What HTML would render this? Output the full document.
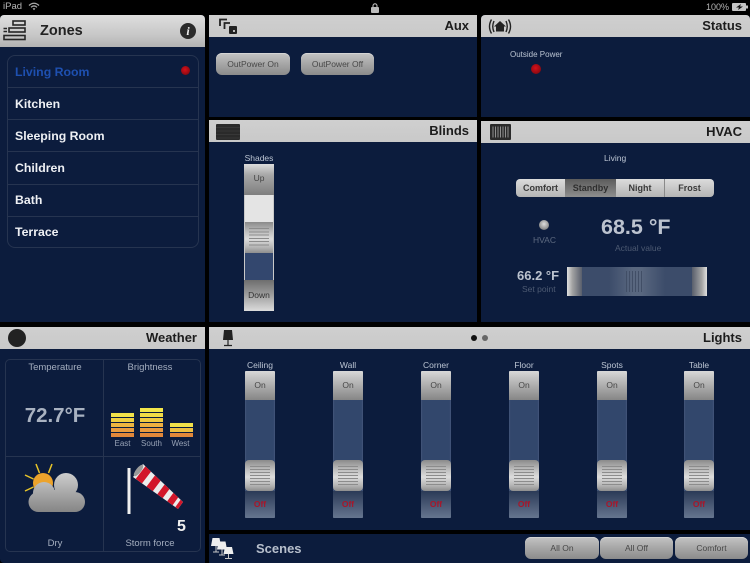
<!DOCTYPE html>
<html><head><meta charset="utf-8">
<style>
html,body{margin:0;padding:0;background:#000;width:750px;height:563px;overflow:hidden}
body{font-family:"Liberation Sans",sans-serif;position:relative;filter:blur(.35px)}
div,span{position:absolute;box-sizing:border-box}
svg{position:absolute;overflow:visible}
.body{background:#0c1c3d}
.hd{background:linear-gradient(#cfcfcf,#c9c9c9);height:22px}
.ttl{position:absolute;right:8px;top:2px;font-weight:bold;font-size:13px;color:#1c1c1c;line-height:18px;white-space:nowrap}
.t{white-space:nowrap;text-align:center;line-height:12px}
.lbl{font-size:8.5px;color:#bcc5d3}
.btn{height:22px;border-radius:6px;background:linear-gradient(#c4c4c4 0%,#a9a9a9 45%,#8b8b8b 100%);color:#484848;font-size:8.5px;text-align:center;line-height:22px;box-shadow:inset 0 1px 0 #d4d4d4}
.row{left:15px;font-weight:bold;font-size:12.3px;color:#eef0f4;line-height:16px;white-space:nowrap}
.div{left:8px;width:190px;height:1px;background:#263450}
.s{width:30px;height:147px;top:371px;background:linear-gradient(90deg,#46577c,#32476c 5%,#32476c 95%,#46577c);border-radius:1px}
.cap{left:0;width:30px;height:29px;top:0;background:linear-gradient(#d8d8d8,#c2c2c2 25%,#868686 100%);color:#484848;font-size:8.5px;text-align:center;line-height:29px;border-radius:1px 1px 0 0}
.off{left:0;width:30px;height:27px;top:120px;background:linear-gradient(#2b3a57,#66758f);color:#a8162a;font-size:8.5px;text-align:center;line-height:26px;font-weight:bold;border-radius:0 0 1px 1px}
.kn{left:0;width:30px;height:31px;top:89px;border-radius:4px;background:linear-gradient(#8a8a8a,#c4c4c4 35%,#dcdcdc 55%,#b8b8b8 80%,#8e8e8e)}
.kn i{position:absolute;left:5px;width:20px;height:1px;background:#8c8c8c}
.bar{left:0;width:23px;height:3.5px}
.seg{top:179px;height:18px;font-size:9px;font-weight:bold;color:#3a3a3a;text-align:center;line-height:18px;background:linear-gradient(#dcdcdc,#b4b4b4)}
</style></head><body>

<!-- status bar -->
<div class="t" style="left:3px;top:1px;font-size:9.5px;color:#b8b8b8">iPad</div>
<svg style="left:28px;top:2px" width="12" height="9" viewBox="0 0 12 9"><path d="M1 3.5Q6-1 11 3.5M3 5.3Q6 2.6 9 5.3" fill="none" stroke="#aaa" stroke-width="1.3"/><path d="M4.6 6.6L6 8.2 7.4 6.6Q6 5.6 4.6 6.6Z" fill="#aaa"/></svg>
<svg style="left:371px;top:3px" width="8" height="10" viewBox="0 0 8 10"><rect y="4" width="8" height="6" rx="1" fill="#bbb"/><path d="M2 4.5V2.8a2 2 0 0 1 4 0V4.5" fill="none" stroke="#bbb" stroke-width="1.1"/></svg>
<div class="t" style="left:706px;top:1px;font-size:9px;color:#b4b4b4">100%</div>
<svg style="left:732px;top:3px" width="16" height="8" viewBox="0 0 16 8"><rect width="14" height="8" rx="1" fill="#c4c4c4"/><rect x="14" y="2.5" width="2" height="3" fill="#c4c4c4"/><path d="M9 1L4 4.5H7L6 7 11 3.5H8Z" fill="#111"/></svg>

<!-- Zones -->
<div class="body" style="left:0;top:15px;width:205px;height:307px;border-radius:4px 4px 0 0"></div>
<div style="left:0;top:15px;width:205px;height:32px;border-radius:4px 4px 0 0;background:linear-gradient(#dedede,#c6c6c6 65%,#b2b2b2)"></div>
<svg style="left:3px;top:20px" width="23" height="21" viewBox="0 0 23 21"><g fill="none" stroke="#262626" stroke-width="1.6"><rect x="10" y="1" width="12" height="4"/><rect x="6" y="8" width="16" height="4"/><rect x="1" y="15.5" width="21" height="4"/></g><path d="M0.500 8.500h3.500M0.500 11.500h3.500" stroke="#262626" stroke-width="1.6"/></svg>
<div class="t" style="left:40px;top:23px;font-size:14.5px;font-weight:bold;color:#222;line-height:16px">Zones</div>
<div style="left:180px;top:23px;width:16px;height:16px;border-radius:50%;background:#2a2a2a;color:#eee;font:italic bold 12px/16px 'Liberation Serif',serif;text-align:center">i</div>

<div style="left:7px;top:55px;width:192px;height:193px;border:1px solid #263450;border-radius:8px"></div>
<div class="div" style="top:87px"></div><div class="div" style="top:119px"></div><div class="div" style="top:151px"></div><div class="div" style="top:184px"></div><div class="div" style="top:216px"></div>
<div class="row" style="top:64px;color:#1e50b0">Living Room</div>
<div style="left:181px;top:66px;width:9px;height:9px;border-radius:50%;background:radial-gradient(circle at 45% 40%,#d8101a,#8c0a12 70%,#3a1a22)"></div>
<div class="row" style="top:96px">Kitchen</div>
<div class="row" style="top:128px">Sleeping Room</div>
<div class="row" style="top:160px">Children</div>
<div class="row" style="top:192px">Bath</div>
<div class="row" style="top:224px">Terrace</div>

<!-- Aux -->
<div class="body" style="left:209px;top:15px;width:268px;height:102px"></div>
<div class="hd" style="left:209px;top:15px;width:268px"><span class="ttl">Aux</span></div>
<svg style="left:219px;top:18px" width="19" height="17" viewBox="0 0 19 17"><g fill="none" stroke="#222" stroke-width="1.800"><path d="M1 8V1.500H8"/><path d="M5.500 11V5H11"/></g><rect x="10" y="8" width="8" height="8" rx="1" fill="#222"/><rect x="14" y="12" width="2" height="2" fill="#bbb"/></svg>
<div class="btn" style="left:216px;top:53px;width:74px">OutPower On</div>
<div class="btn" style="left:301px;top:53px;width:73px">OutPower Off</div>

<!-- Status -->
<div class="body" style="left:481px;top:15px;width:269px;height:102px;border-radius:4px 4px 0 0"></div>
<div class="hd" style="left:481px;top:15px;width:269px;border-radius:4px 4px 0 0"><span class="ttl">Status</span></div>
<svg style="left:488px;top:19px" width="24" height="15" viewBox="0 0 24 15"><g fill="none" stroke="#222" stroke-width="1.400"><path d="M3.500 0.500Q-0.500 7.500 3.500 14.500M20.500 0.500Q24.500 7.500 20.500 14.500M6 2Q3.500 7.500 6 13M18 2Q20.500 7.500 18 13"/></g><path d="M12 2L18 7.500H16V12.500H8V7.500H6Z" fill="#222"/></svg>
<div class="t" style="left:510px;top:49px;font-size:8px;color:#bcc5d3">Outside Power</div>
<div style="left:531px;top:64px;width:10px;height:10px;border-radius:50%;background:radial-gradient(circle at 45% 40%,#d8101a,#8c0a12 70%,#3a1a22)"></div>

<!-- Blinds -->
<div class="body" style="left:209px;top:120px;width:268px;height:202px"></div>
<div class="hd" style="left:209px;top:120px;width:268px"><span class="ttl">Blinds</span></div>
<svg style="left:216px;top:124px" width="24" height="16" viewBox="0 0 24 16"><rect width="24" height="16" rx="1" fill="#2a2a2a"/><path d="M0 3.500H24M0 7H24M0 10.500H24M0 14H24" stroke="#3c3c3c" stroke-width=".8"/></svg>
<div class="t lbl" style="left:244px;top:152px;width:30px">Shades</div>
<div style="left:244px;top:164px;width:30px;height:147px;background:#c9c9c9;border-radius:1px"></div>
<div style="left:244px;top:164px;width:30px;height:31px;background:linear-gradient(#dcdcdc,#a8a8a8 35%,#7e7e7e);color:#444;font-size:8.5px;text-align:center;line-height:29px">Up</div>
<div style="left:245px;top:195px;width:28px;height:27px;background:#e4e4e4"></div>
<div style="left:245px;top:222px;width:28px;height:31px;background:linear-gradient(#8a8a8a,#c4c4c4 35%,#dcdcdc 55%,#b8b8b8 80%,#8e8e8e)"></div>
<div style="left:249px;top:228px;width:20px;height:19px;background:repeating-linear-gradient(#8c8c8c 0 1px,transparent 1px 3.300px)"></div>
<div style="left:245px;top:253px;width:28px;height:27px;background:#33476e"></div>
<div style="left:244px;top:280px;width:30px;height:31px;background:linear-gradient(#6e6e6e,#a0a0a0 50%,#dcdcdc);color:#333;font-size:8.5px;text-align:center;line-height:31px">Down</div>

<!-- HVAC -->
<div class="body" style="left:481px;top:121px;width:269px;height:201px"></div>
<div class="hd" style="left:481px;top:121px;width:269px"><span class="ttl">HVAC</span></div>
<svg style="left:490px;top:124px" width="21" height="16" viewBox="0 0 21 16"><rect width="21" height="16" rx="1" fill="#2a2a2a"/><path d="M3 2.500V13.500M5.500 2.500V13.500M8 2.500V13.500M10.500 2.500V13.500M13 2.500V13.500M15.500 2.500V13.500M18 2.500V13.500" stroke="#8f8f8f" stroke-width="1"/></svg>
<div class="t lbl" style="left:604px;top:152px">Living</div>
<div class="seg" style="left:516px;width:49px;border-radius:4px 0 0 4px">Comfort</div>
<div class="seg" style="left:565px;width:51px;background:linear-gradient(#5c5c5c,#8e8e8e);color:#2e2e2e">Standby</div>
<div class="seg" style="left:616px;width:49px;border-right:1px solid #8a8a8a">Night</div>
<div class="seg" style="left:665px;width:49px;border-radius:0 4px 4px 0">Frost</div>
<div style="left:539px;top:220px;width:10px;height:10px;border-radius:50%;background:radial-gradient(circle at 50% 40%,#dedede,#8f8f8f 65%,#3a3f4c)"></div>
<div class="t" style="left:533px;top:234px;font-size:8.5px;color:#5e6a80">HVAC</div>
<div class="t" style="left:601px;top:215px;font-size:21.500px;font-weight:bold;color:#bcc3cf;line-height:24px">68.5 °F</div>
<div class="t" style="left:615px;top:242px;font-size:8.500px;color:#4d5a72">Actual value</div>
<div class="t" style="left:517px;top:269px;font-size:13px;font-weight:bold;color:#bcc3cf;line-height:14px">66.2 °F</div>
<div class="t" style="left:522px;top:283px;font-size:8.500px;color:#4d5a72">Set point</div>
<div style="left:567px;top:267px;width:140px;height:29px;background:linear-gradient(90deg,#3c4c6a 0%,#3c4c6a 30%,#59677f 47%,#59677f 53%,#3c4c6a 70%,#3c4c6a 100%);border-radius:1px"></div>
<div style="left:567px;top:267px;width:15px;height:29px;background:linear-gradient(90deg,#e0e0e0,#a4a4a4 35%,#585e6c)"></div>
<div style="left:692px;top:267px;width:15px;height:29px;background:linear-gradient(90deg,#585e6c,#a4a4a4 65%,#e0e0e0)"></div>
<div style="left:626px;top:271px;width:17px;height:21px;background:repeating-linear-gradient(90deg,#414e66 0 1px,transparent 1px 3px)"></div>

<!-- Weather -->
<div class="body" style="left:0;top:327px;width:205px;height:236px;border-radius:0 0 0 4px"></div>
<div class="hd" style="left:0;top:327px;width:205px;height:22px"><span class="ttl">Weather</span></div>
<div style="left:8px;top:329px;width:18px;height:18px;border-radius:50%;background:radial-gradient(#222 70%,#555)"></div>
<div style="left:5px;top:359px;width:196px;height:193px;border:1px solid #263450;border-radius:5px"></div>
<div style="left:103px;top:359px;width:1px;height:193px;background:#263450"></div>
<div style="left:5px;top:456px;width:196px;height:1px;background:#263450"></div>
<div class="t" style="left:6px;width:98px;top:362px;font-size:9.500px;color:#a4aebf">Temperature</div>
<div class="t" style="left:101px;width:98px;top:362px;font-size:9.500px;color:#a4aebf">Brightness</div>
<div class="t" style="left:5px;width:100px;top:404px;font-size:20.500px;font-weight:bold;color:#a9b2c1;line-height:24px">72.7°F</div>
<div style="left:111px;top:413px;width:23px;height:24px"><span class="bar" style="top:0;background:#f2e24a"></span><span class="bar" style="top:5px;background:#f0d040"></span><span class="bar" style="top:10px;background:#eeb640"></span><span class="bar" style="top:15px;background:#e89c3e"></span><span class="bar" style="top:20px;background:#e2883a"></span></div>
<div style="left:140px;top:408px;width:23px;height:29px"><span class="bar" style="top:0;background:#f4e64a"></span><span class="bar" style="top:5px;background:#f2dc46"></span><span class="bar" style="top:10px;background:#f0ca40"></span><span class="bar" style="top:15px;background:#eeb040"></span><span class="bar" style="top:20px;background:#e89a3e"></span><span class="bar" style="top:25px;background:#e2883a"></span></div>
<div style="left:170px;top:423px;width:23px;height:14px"><span class="bar" style="top:0;background:#f2e24a"></span><span class="bar" style="top:5px;background:#eec040"></span><span class="bar" style="top:10px;background:#e2883a"></span></div>
<div class="t" style="left:111px;width:23px;top:438px;font-size:8px;color:#97a2b5">East</div>
<div class="t" style="left:140px;width:23px;top:438px;font-size:8px;color:#97a2b5">South</div>
<div class="t" style="left:170px;width:21px;top:438px;font-size:8px;color:#97a2b5">West</div>

<svg style="left:0;top:0" width="205" height="563" viewBox="0 0 205 563">
<defs><linearGradient id="cl" gradientUnits="userSpaceOnUse" x1="0" y1="473" x2="0" y2="512"><stop offset="0" stop-color="#cdcdcd"/><stop offset="1" stop-color="#858585"/></linearGradient></defs>
<g stroke="#e8c52a" stroke-width="1.500" fill="none"><path d="M36 464L39.500 473M52 464L48.500 473M25 475L33.500 479M25 491L33.500 487"/></g>
<circle cx="43" cy="483" r="10" fill="#eca32c"/>
<g fill="url(#cl)"><circle cx="66" cy="485" r="12"/><circle cx="44" cy="493" r="11"/><circle cx="38.500" cy="502" r="10"/><circle cx="75" cy="502" r="10"/><rect x="38.500" y="490" width="36.500" height="22"/></g>
<rect x="127.500" y="468" width="3" height="46" fill="#f0f0f0"/>
<path d="M143 464L183 502 178 509 133 477Z" fill="#ececec"/>
<path d="M145.400 466.300L151 471.600 142 483.400 135.700 478.900ZM155 475.400L160.600 480.700 152.800 491.100 146.500 486.600ZM164.600 484.500L169.400 489.100 162.700 498.100 157.300 494.300ZM173.400 492.900L178.200 497.400 172.600 505.200 167.200 501.300ZM180.600 499.700L183 502 178 509 175.300 507.100Z" fill="#d2162a"/>
<ellipse cx="138.500" cy="470.500" rx="2.500" ry="7" transform="rotate(38 138.500 470.500)" fill="#9a9a9a"/>
</svg>
<div class="t" style="left:5px;width:100px;top:538px;font-size:9.500px;color:#a4aebf">Dry</div>
<div class="t" style="left:177px;top:518px;font-size:16px;font-weight:bold;color:#f0f0f0;line-height:18px">5</div>
<div class="t" style="left:101px;width:98px;top:538px;font-size:9.500px;color:#a4aebf">Storm force</div>

<!-- Lights -->
<div class="body" style="left:209px;top:327px;width:541px;height:203px"></div>
<div class="hd" style="left:209px;top:327px;width:541px"><span class="ttl">Lights</span></div>
<svg style="left:222px;top:330px" width="12" height="17" viewBox="0 0 12 17"><path d="M2 0H10L11 10H1Z" fill="#222"/><path d="M6 10V15M2 15.500H10" stroke="#222" stroke-width="1.200"/></svg>
<div style="left:471px;top:335px;width:6px;height:6px;border-radius:50%;background:#111"></div>
<div style="left:482px;top:335px;width:6px;height:6px;border-radius:50%;background:#666"></div>

<div class="t lbl" style="left:245px;width:30px;top:359px">Ceiling</div>
<div class="s" style="left:245px"><div class="cap">On</div><div class="off">Off</div><div class="kn"><i style="top:6px"></i><i style="top:9px"></i><i style="top:12px"></i><i style="top:15px"></i><i style="top:18px"></i><i style="top:21px"></i><i style="top:24px"></i></div></div>
<div class="t lbl" style="left:333px;width:30px;top:359px">Wall</div>
<div class="s" style="left:333px"><div class="cap">On</div><div class="off">Off</div><div class="kn"><i style="top:6px"></i><i style="top:9px"></i><i style="top:12px"></i><i style="top:15px"></i><i style="top:18px"></i><i style="top:21px"></i><i style="top:24px"></i></div></div>
<div class="t lbl" style="left:421px;width:30px;top:359px">Corner</div>
<div class="s" style="left:421px"><div class="cap">On</div><div class="off">Off</div><div class="kn"><i style="top:6px"></i><i style="top:9px"></i><i style="top:12px"></i><i style="top:15px"></i><i style="top:18px"></i><i style="top:21px"></i><i style="top:24px"></i></div></div>
<div class="t lbl" style="left:509px;width:30px;top:359px">Floor</div>
<div class="s" style="left:509px"><div class="cap">On</div><div class="off">Off</div><div class="kn"><i style="top:6px"></i><i style="top:9px"></i><i style="top:12px"></i><i style="top:15px"></i><i style="top:18px"></i><i style="top:21px"></i><i style="top:24px"></i></div></div>
<div class="t lbl" style="left:597px;width:30px;top:359px">Spots</div>
<div class="s" style="left:597px"><div class="cap">On</div><div class="off">Off</div><div class="kn"><i style="top:6px"></i><i style="top:9px"></i><i style="top:12px"></i><i style="top:15px"></i><i style="top:18px"></i><i style="top:21px"></i><i style="top:24px"></i></div></div>
<div class="t lbl" style="left:684px;width:30px;top:359px">Table</div>
<div class="s" style="left:684px"><div class="cap">On</div><div class="off">Off</div><div class="kn"><i style="top:6px"></i><i style="top:9px"></i><i style="top:12px"></i><i style="top:15px"></i><i style="top:18px"></i><i style="top:21px"></i><i style="top:24px"></i></div></div>

<!-- Scenes -->
<div class="body" style="left:209px;top:534px;width:541px;height:29px"></div>
<svg style="left:211px;top:537px" width="24" height="22" viewBox="0 0 24 22"><g fill="#eee"><path d="M1.500 1H8.500L10 9H0Z"/><path d="M7.500 4.500H14.500L16 12.500H6Z"/><path d="M14 10H21L22.500 17H12.500Z"/></g><path d="M5 9V15M2 15H8M11 12.500V18M8 18H14M17.500 17V21M14 21.500H21" stroke="#c9c9c9" stroke-width="1"/></svg>
<div class="t" style="left:256px;top:541px;font-size:13px;font-weight:bold;color:#b7bfcc;line-height:15px">Scenes</div>
<div class="btn" style="left:525px;top:537px;width:74px">All On</div>
<div class="btn" style="left:600px;top:537px;width:73px">All Off</div>
<div class="btn" style="left:675px;top:537px;width:73px">Comfort</div>

</body></html>
